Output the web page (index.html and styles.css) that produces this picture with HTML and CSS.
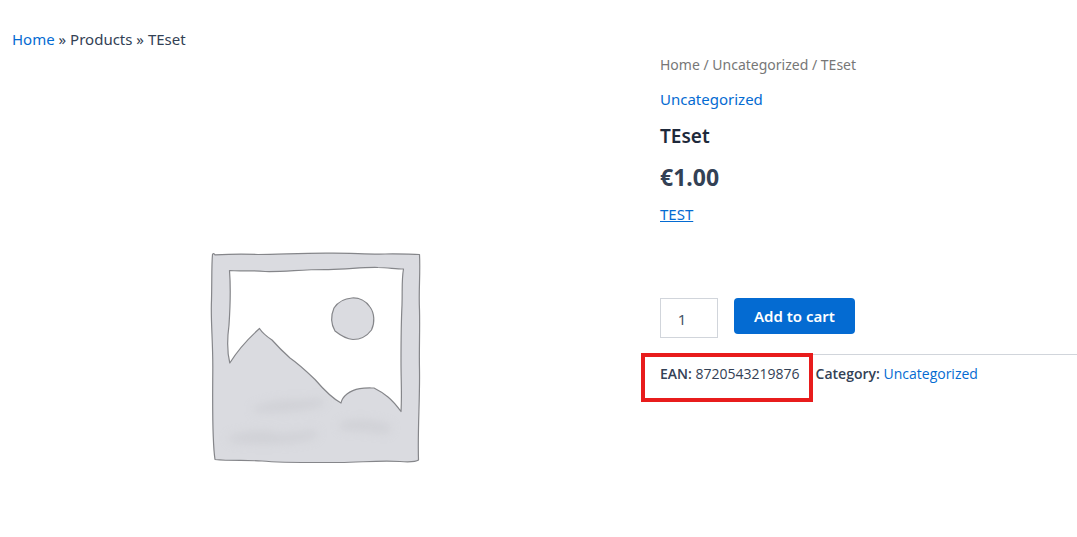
FILE: index.html
```html
<!DOCTYPE html>
<html lang="en">
<head>
<meta charset="utf-8">
<meta name="viewport" content="width=device-width, initial-scale=1">
<title>TEset</title>
<link rel="stylesheet" href="styles.css">
</head>
<body>
<main class="product">
  <section class="gallery">
    <nav class="trail" aria-label="Site path"><a href="#">Home</a> » Products » TEset</nav>
    <figure class="photo">
      <svg class="placeholder" viewBox="208 250 216 216" role="img" aria-label="Placeholder">
        <defs>
          <filter id="wash" x="-20%" y="-40%" width="140%" height="180%"><feGaussianBlur stdDeviation="5"/></filter>
        </defs>
        <path class="ink" fill-rule="evenodd" d="M212.500 254.500Q213.500 252.500 215 254.800Q240 253.500 258 254.500C280 254.500 300 253 330 253.200C350 253 370 254.500 385 254C400 253.500 410 254.500 419.500 254.500C420.500 275 418.500 290 419.500 310C420 330 419 350 419.500 370C420 400 417.500 430 418.500 460Q415 462.500 400 461.500C380 460 360 462.500 340 462.500C300 462.500 280 462.800 262 461C245 460 230 461 215 459.500C212 440 212.500 410 212.800 370C213 340 210.500 320 211.500 300C212 280 211.500 265 212.500 254.500ZM229.500 270.500C231 290 230 310 229 325C227 340 227 352 229.800 363Q241 345 259.500 328.500Q263 334 272 340Q280 349 290 358Q300 365 315 379.500Q330 397 341 403Q342 398 347 394C356 387 367 388 374 388Q382 392 388 397Q394 402 401 411.500C402 395 401 380 401 362C401 340 401 325 402 305C402.500 290 401.500 280 403.500 269C395 269 388 267.500 378 267.500C360 267 345 270 325 269.500C300 269.500 285 272 265 271.500C250 270 240 271.500 229.500 270.500Z"/>
        <path class="ink" d="M352 298C359 297.500 366 301 370 307C374.500 313 375 323 371.500 330C367 336 360 339.500 353 339.500C346 339 340 335 335 331C331 324 331 315 334 308C338 302 344 298.500 352 298Z"/>
        <g class="shade" filter="url(#wash)">
          <path d="M252 408Q275 398 300 400L325 398L322 406Q295 414 254 412Z"/>
          <path d="M228 436Q262 426 280 434L318 430L316 438Q280 448 230 442Z"/>
          <path d="M340 422Q370 416 392 426L388 434Q360 430 340 430Z"/>
        </g>
      </svg>
    </figure>
  </section>

  <section class="summary">
    <nav class="breadcrumb" aria-label="Breadcrumb"><a href="#">Home</a> / <a href="#">Uncategorized</a> / TEset</nav>
    <a class="category" href="#">Uncategorized</a>
    <h1 class="title">TEset</h1>
    <p class="price">€1.00</p>
    <p class="excerpt"><a href="#">TEST</a></p>
    <form class="cart">
      <input class="quantity" type="text" inputmode="numeric" value="1" aria-label="Quantity">
      <button class="add" type="button">Add to cart</button>
    </form>
    <div class="meta">
      <span class="ean"><b>EAN:</b> 8720543219876</span>
      <span><b>Category:</b> <a href="#">Uncategorized</a></span>
    </div>
  </section>
</main>
</body>
</html>
```
FILE: styles.css
```css
* { box-sizing: border-box; }

body {
  margin: 0;
  background: #fff;
  color: #334155;
  font-family: "Noto Sans", "Open Sans", sans-serif;
  font-size: 15px;
  line-height: 24px;
}

a { color: #046bd2; text-decoration: none; }

.product {
  display: grid;
  grid-template-columns: 608fr 417fr;
  column-gap: 40px;
  padding: 27px 0 0 12px;
}

.photo {
  display: flex;
  justify-content: center;
  margin: 199px 0 0;
}

.placeholder { display: block; width: 216px; height: 216px; }
.ink { fill: #dadbe0; stroke: #85868a; stroke-width: 1.2; stroke-linejoin: round; }
.shade { fill: #c7c8cd; opacity: 0.5; }

.summary {
  display: flex;
  flex-direction: column;
  align-items: stretch;
  padding-top: 26px;
}

.breadcrumb { color: #777; font-size: 14px; }
.breadcrumb a { color: inherit; }
.category { align-self: flex-start; margin-top: 10px; }

.title {
  margin: 11px 0 0;
  color: #1e293b;
  font-size: 19px;
  font-weight: 600;
  line-height: 28px;
}

.price {
  margin: 10px 0 0;
  font-size: 23px;
  font-weight: 700;
  line-height: 34px;
}

.excerpt { margin: 8px 0 0; }
.excerpt a { text-decoration: underline; }

.cart {
  display: flex;
  align-items: flex-start;
  gap: 16px;
  margin-top: 72px;
}

.quantity {
  width: 58px;
  height: 40px;
  padding: 2px 14px 0 0;
  border: 1px solid #d1d5db;
  border-radius: 0;
  background: #fff;
  color: #475569;
  font: inherit;
  text-align: center;
}

.add {
  height: 36px;
  padding: 0 20px;
  border: 0;
  border-radius: 4px;
  background: #046bd2;
  color: #fff;
  font: inherit;
  font-weight: 600;
}

.meta {
  display: flex;
  gap: 16px;
  margin-top: 16px;
  padding-top: 7px;
  border-top: 1px solid #d1d5db;
  font-family: "Open Sans", "Noto Sans", sans-serif;
  font-size: 14px;
}

.meta b { font-weight: 600; }
.ean { position: relative; }

.ean::after {
  content: "";
  position: absolute;
  inset: -9px -13px -16px -19px;
  border: 4px solid #e81c1c;
}
```
